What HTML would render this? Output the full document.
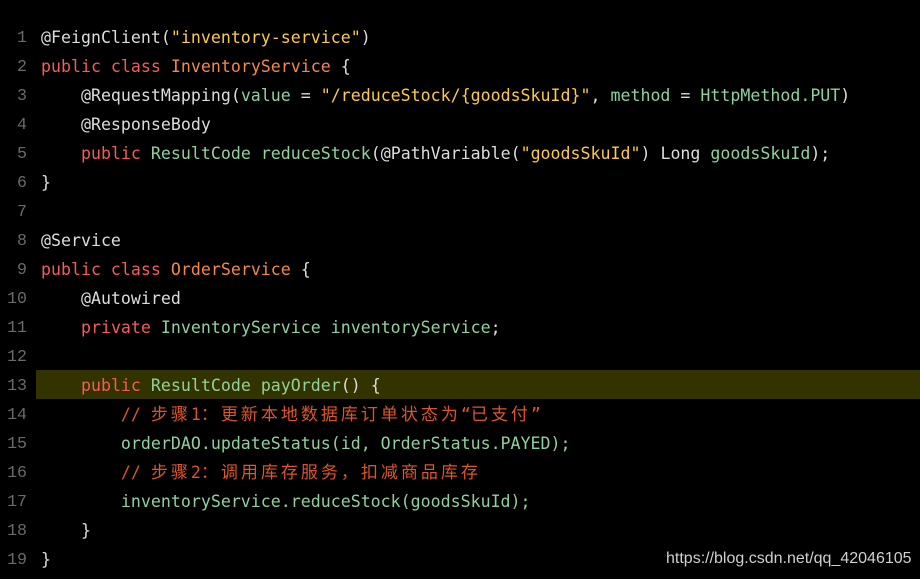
<!DOCTYPE html>
<html><head><meta charset="utf-8"><style>
body{margin:0;background:#000;width:920px;height:579px;overflow:hidden;position:relative;font-family:"DejaVu Sans Mono","Liberation Mono",monospace;font-size:16.6px;color:#dcdcdc}
.l{position:absolute;left:0;height:29px;line-height:29px;white-space:pre;width:920px;overflow:hidden}
.n{position:absolute;left:0;width:27px;text-align:right;color:#6a6a6a;font-family:"Liberation Mono",monospace}
.c{position:absolute;left:41px;top:0;height:29px}
.hl{background:#333300;left:36px;width:884px}
.k{color:#f55b5b}.t{color:#f5874a}.g{color:#8fd19e}.s{color:#fdc94a}.m{color:#dc552c}
.z{letter-spacing:3px;font-family:"Noto Sans CJK SC",sans-serif;font-size:17px;line-height:17px}
.wm{position:absolute;left:666px;top:550px;font-family:"Liberation Sans",sans-serif;font-size:16px;color:#cfcfcf}
</style></head><body>
<div class="l hl" style="top:370px"></div>
<div class="l" style="top:23px"><span class="n">1</span><span class="c">@FeignClient(<span class="s">"inventory-service"</span>)</span></div>
<div class="l" style="top:52px"><span class="n">2</span><span class="c"><span class="k">public class</span> <span class="t">InventoryService</span> {</span></div>
<div class="l" style="top:81px"><span class="n">3</span><span class="c">    @RequestMapping(<span class="g">value</span> = <span class="s">"/reduceStock/{goodsSkuId}"</span>, <span class="g">method</span> = <span class="g">HttpMethod.PUT</span>)</span></div>
<div class="l" style="top:110px"><span class="n">4</span><span class="c">    @ResponseBody</span></div>
<div class="l" style="top:139px"><span class="n">5</span><span class="c">    <span class="k">public</span> <span class="g">ResultCode reduceStock</span>(@PathVariable(<span class="s">"goodsSkuId"</span>) Long <span class="g">goodsSkuId</span>);</span></div>
<div class="l" style="top:168px"><span class="n">6</span><span class="c">}</span></div>
<div class="l" style="top:197px"><span class="n">7</span></div>
<div class="l" style="top:226px"><span class="n">8</span><span class="c">@Service</span></div>
<div class="l" style="top:255px"><span class="n">9</span><span class="c"><span class="k">public class</span> <span class="t">OrderService</span> {</span></div>
<div class="l" style="top:284px"><span class="n">10</span><span class="c">    @Autowired</span></div>
<div class="l" style="top:313px"><span class="n">11</span><span class="c">    <span class="k">private</span> <span class="g">InventoryService inventoryService</span>;</span></div>
<div class="l" style="top:342px"><span class="n">12</span></div>
<div class="l" style="top:371px"><span class="n">13</span><span class="c">    <span class="k">public</span> <span class="g">ResultCode payOrder</span>() {</span></div>
<div class="l" style="top:400px"><span class="n">14</span><span class="c m">        // <span class="z">步骤</span>1<span class="z">：更新本地数据库订单状态为</span>“<span class="z">已支付</span>”</span></div>
<div class="l" style="top:429px"><span class="n">15</span><span class="c g">        orderDAO.updateStatus(id, OrderStatus.PAYED);</span></div>
<div class="l" style="top:458px"><span class="n">16</span><span class="c m">        // <span class="z">步骤</span>2<span class="z">：调用库存服务，扣减商品库存</span></span></div>
<div class="l" style="top:487px"><span class="n">17</span><span class="c g">        inventoryService.reduceStock(goodsSkuId);</span></div>
<div class="l" style="top:516px"><span class="n">18</span><span class="c">    }</span></div>
<div class="l" style="top:545px"><span class="n">19</span><span class="c">}</span></div>
<div class="wm">https://blog.csdn.net/qq_42046105</div>
</body></html>
